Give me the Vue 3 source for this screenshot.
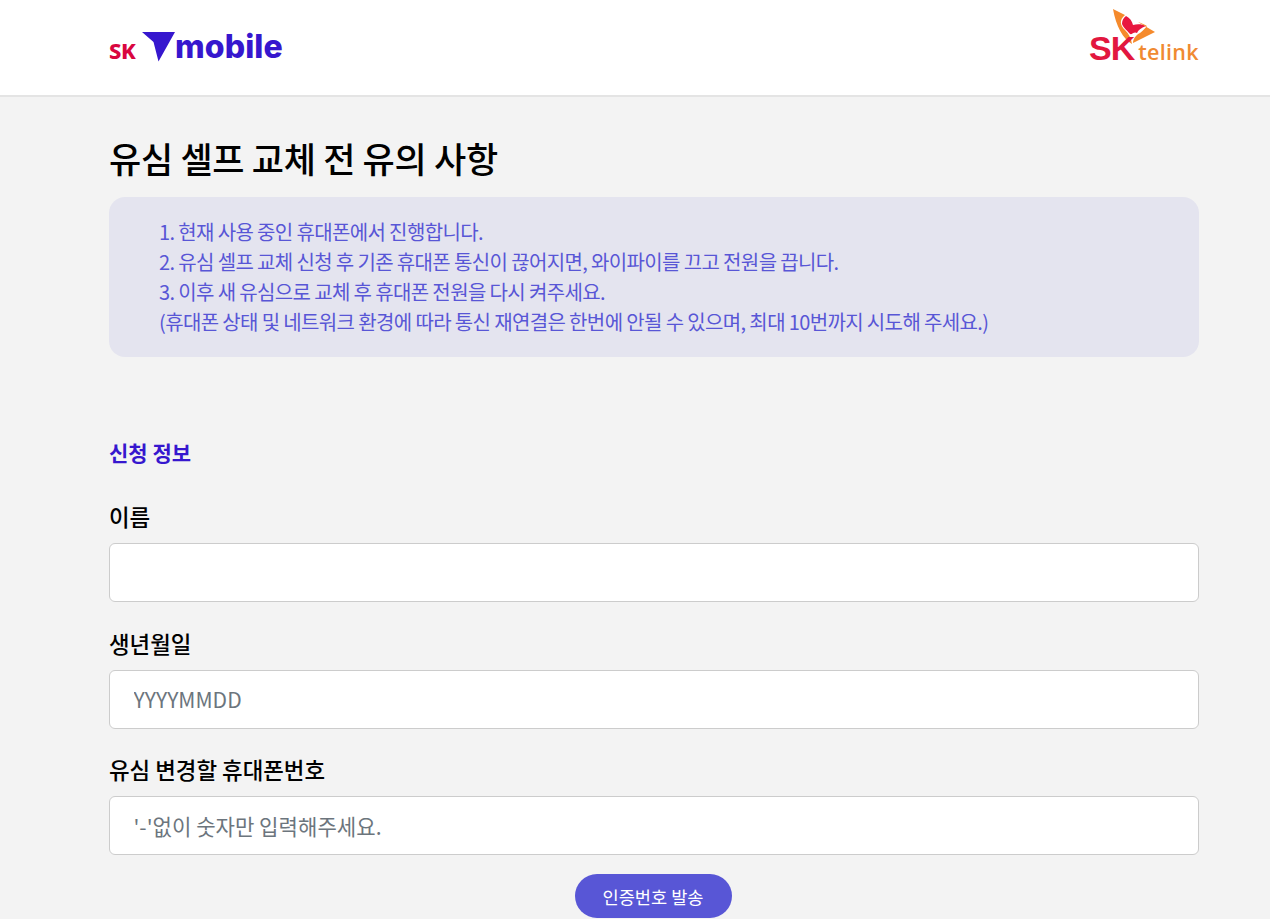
<template>
  <div class="page">
    <header class="header">
      <div class="header-inner">
        <div class="logo-left">
          <span class="sk-small">SK</span>
          <svg class="seven" width="33" height="30" viewBox="0 0 33 30">
            <path d="M0 0H33L16.500 29.500L11.500 10Z" fill="#3617ce" />
          </svg>
          <span class="mobile">mobile</span>
        </div>
        <div class="logo-right">
          <svg class="wing" width="43" height="36" viewBox="0 0 43 36">
            <path d="M0 0L12 6C6 11 7 16 12 21C16 25 18 29 19 35C10 30 3 17 0 0Z" fill="#f58a2c" />
            <path d="M13 7C17 9 19 12 20 16C24 15 29 15 33 17C28 19 25 21 24 24C21 22 19 26 17 25C15 22 11 20 9 15C9 12 10 9 13 7Z" fill="#e8173f" />
            <path d="M25 13L42 23L20 34C20 30 23 26 27 24C30 22 32 19 34 17C31 15 28 14 25 13Z" fill="#f58a2c" />
          </svg>
          <div class="right-text">
            <span class="sk-big">SK</span>
            <span class="telink">telink</span>
          </div>
        </div>
      </div>
    </header>

    <main class="content">
      <h1 class="title">유심 셀프 교체 전 유의 사항</h1>
      <div class="notice">
        <p v-for="line in notices" :key="line">{{ line }}</p>
      </div>

      <h2 class="section">신청 정보</h2>

      <div v-for="field in fields" :key="field.label" class="field">
        <label class="label">{{ field.label }}</label>
        <input class="input" type="text" :placeholder="field.placeholder" />
      </div>

      <div class="actions">
        <button class="send" type="button">인증번호 발송</button>
      </div>
    </main>
  </div>
</template>

<script setup>
const notices = [
  '1. 현재 사용 중인 휴대폰에서 진행합니다.',
  '2. 유심 셀프 교체 신청 후 기존 휴대폰 통신이 끊어지면, 와이파이를 끄고 전원을 끕니다.',
  '3. 이후 새 유심으로 교체 후 휴대폰 전원을 다시 켜주세요.',
  '(휴대폰 상태 및 네트워크 환경에 따라 통신 재연결은 한번에 안될 수 있으며, 최대 10번까지 시도해 주세요.)'
]

const fields = [
  { label: '이름', placeholder: '' },
  { label: '생년월일', placeholder: 'YYYYMMDD' },
  { label: '유심 변경할 휴대폰번호', placeholder: "'-'없이 숫자만 입력해주세요." }
]
</script>

<style>
html,
body {
  margin: 0;
  background: #f3f3f3;
}
</style>

<style scoped>
.page {
  font-family: "Noto Sans CJK KR", "Noto Sans", sans-serif;
  color: #000;
  background: #f3f3f3;
}

.header {
  height: 95px;
  background: #fff;
  border-bottom: 2px solid #e4e4e4;
}

.header-inner {
  width: 1090px;
  height: 100%;
  margin-left: 109px;
  display: flex;
  justify-content: space-between;
}

.logo-left {
  display: flex;
  align-items: center;
  height: 94px;
}

.sk-small {
  font-family: "Noto Sans", sans-serif;
  font-weight: 800;
  font-size: 22px;
  letter-spacing: -0.5px;
  color: #d9063f;
  margin-top: 5px;
  width: 33px;
}

.seven {
  margin-top: -1px;
}

.mobile {
  font-family: "Inter", sans-serif;
  font-weight: 800;
  font-size: 32px;
  letter-spacing: 0.1px;
  color: #3617ce;
  margin-top: -1px;
}

.logo-right {
  position: relative;
  width: 110px;
}

.wing {
  position: absolute;
  left: 24px;
  top: 9px;
}

.right-text {
  position: absolute;
  left: 0;
  top: 29px;
  display: flex;
  align-items: baseline;
}

.sk-big {
  font-family: "Liberation Sans", sans-serif;
  font-weight: 700;
  font-size: 34px;
  letter-spacing: -1px;
  color: #e2173f;
}

.telink {
  font-family: "Open Sans", sans-serif;
  font-weight: 600;
  font-size: 21.500px;
  letter-spacing: 0.3px;
  color: #f08a32;
  margin-left: 4px;
}

.content {
  width: 1090px;
  margin-left: 109px;
  padding-top: 36px;
}

.title {
  margin: 0;
  font-size: 35px;
  line-height: 50px;
  font-weight: 500;
  letter-spacing: -0.3px;
}

.notice {
  margin-top: 14px;
  height: 160px;
  box-sizing: border-box;
  padding: 20px 50px;
  background: #e4e4ef;
  border-radius: 16px;
  color: #5856d6;
  font-size: 20px;
  line-height: 30px;
  letter-spacing: -0.63px;
}

.notice p {
  margin: 0;
}

.section {
  margin: 79px 0 0;
  font-size: 21px;
  line-height: 32px;
  font-weight: 700;
  color: #3617ce;
}

.field {
  margin-top: 31px;
}

.field + .field {
  margin-top: 23.500px;
}

.label {
  display: block;
  font-size: 22.400px;
  line-height: 34px;
  font-weight: 500;
  margin-bottom: 10px;
}

.input {
  display: block;
  width: 100%;
  height: 59px;
  box-sizing: border-box;
  padding: 0 23.500px;
  background: #fff;
  border: 1px solid #ccc;
  border-radius: 6px;
  font-family: inherit;
  font-size: 21.120px;
  outline: none;
}

.input::placeholder {
  color: #6c757d;
  opacity: 1;
}

.actions {
  display: flex;
  justify-content: center;
  margin-top: 19px;
  padding-right: 2px;
}

.send {
  width: 157px;
  height: 44px;
  padding: 0;
  border: 0;
  border-radius: 22px;
  background: #5856d6;
  color: #fff;
  font-family: inherit;
  font-size: 17.600px;
}
</style>
